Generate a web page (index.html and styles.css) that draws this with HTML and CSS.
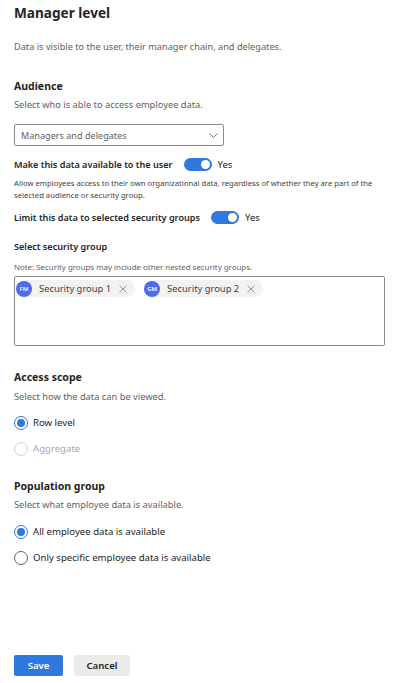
FILE: index.html
```html
<!DOCTYPE html>
<html lang="en">
<head>
<meta charset="utf-8">
<title>Manager level</title>
<link rel="stylesheet" href="styles.css">
</head>
<body>
<main class="panel">
  <h1 class="title">Manager level</h1>
  <p class="desc">Data is visible to the user, their manager chain, and delegates.</p>

  <h2 class="section-title audience">Audience</h2>
  <p class="sub">Select who is able to access employee data.</p>

  <div class="dropdown">
    <span>Managers and delegates</span>
    <svg class="chev" width="9" height="5" viewBox="0 0 9 5"><path d="M0.5 0.5 L4.5 4.5 L8.5 0.5" fill="none" stroke="#616161" stroke-width="0.9"/></svg>
  </div>

  <div class="toggle-row first">
    <span class="label">Make this data available to the user</span>
    <span class="toggle"><span class="knob"></span></span>
    <span class="yes">Yes</span>
  </div>
  <p class="hint">Allow employees access to their own organizational data, regardless of whether they are part of the selected audience or security group.</p>

  <div class="toggle-row second">
    <span class="label">Limit this data to selected security groups</span>
    <span class="toggle"><span class="knob"></span></span>
    <span class="yes">Yes</span>
  </div>

  <p class="label field-label">Select security group</p>
  <p class="note">Note: Security groups may include other nested security groups.</p>
  <div class="picker">
    <span class="chip"><span class="avatar">FM</span><span class="chip-text">Security group 1</span><svg class="x" width="8" height="8" viewBox="0 0 8 8"><path d="M0.5 0.5 L7.5 7.5 M7.5 0.5 L0.5 7.5" stroke="#8a8a8a" stroke-width="0.9"/></svg></span>
    <span class="chip"><span class="avatar">GM</span><span class="chip-text">Security group 2</span><svg class="x" width="8" height="8" viewBox="0 0 8 8"><path d="M0.5 0.5 L7.5 7.5 M7.5 0.5 L0.5 7.5" stroke="#8a8a8a" stroke-width="0.9"/></svg></span>
  </div>

  <h2 class="section-title scope">Access scope</h2>
  <p class="sub">Select how the data can be viewed.</p>
  <div class="radio checked r1"><span class="circle"></span><span>Row level</span></div>
  <div class="radio disabled r2"><span class="circle"></span><span>Aggregate</span></div>

  <h2 class="section-title population">Population group</h2>
  <p class="sub">Select what employee data is available.</p>
  <div class="radio checked r3"><span class="circle"></span><span>All employee data is available</span></div>
  <div class="radio r2"><span class="circle"></span><span>Only specific employee data is available</span></div>

  <div class="actions">
    <button class="btn primary">Save</button>
    <button class="btn secondary">Cancel</button>
  </div>
</main>
</body>
</html>
```
FILE: styles.css
```css
* { box-sizing: border-box; margin: 0; padding: 0; }
html, body { background: #ffffff; }
body {
  font-family: "Noto Sans", "Open Sans", sans-serif;
  color: #242424;
}
.panel {
  width: 385px;
  padding: 3px 0 0 14px;
}
.title {
  font-size: 13.6px;
  font-weight: 700;
  line-height: 20px;
}
.desc {
  margin-top: 17px;
  font-size: 9.2px;
  line-height: 14px;
  color: #616161;
}
.section-title {
  font-size: 10.5px;
  font-weight: 700;
  line-height: 16px;
}
.audience { margin-top: 24px; }
.scope { margin-top: 23px; }
.population { margin-top: 22px; }
.sub {
  margin-top: 4px;
  font-size: 9.3px;
  line-height: 14px;
  color: #616161;
}
.scope + .sub { margin-top: 5px; }
.dropdown {
  margin-top: 12px;
  width: 210px;
  height: 22px;
  border: 1px solid #8a8a8a;
  border-radius: 2px;
  display: flex;
  align-items: center;
  justify-content: space-between;
  padding: 0 5px 0 6px;
  font-size: 9.1px;
  color: #616161;
}
.chev { display: block; }
.toggle-row {
  display: flex;
  align-items: center;
  height: 14px;
}
.toggle-row.first { margin-top: 11px; }
.toggle-row.second { margin-top: 9px; }
.label {
  font-size: 9.1px;
  font-weight: 600;
  color: #242424;
}
.toggle {
  margin-left: 11px;
  width: 28px;
  height: 13px;
  border-radius: 7px;
  background: #2f78e0;
  display: flex;
  align-items: center;
  justify-content: flex-end;
  padding-right: 2px;
}
.knob {
  width: 9px;
  height: 9px;
  border-radius: 50%;
  background: #ffffff;
}
.yes {
  margin-left: 6px;
  font-size: 9.5px;
  color: #242424;
}
.hint {
  margin-top: 6px;
  font-size: 7.7px;
  line-height: 12px;
  color: #424242;
}
.field-label {
  margin-top: 16px;
  line-height: 14px;
}
.note {
  margin-top: 7px;
  font-size: 7.9px;
  line-height: 12px;
  color: #616161;
}
.picker {
  margin-top: 3px;
  width: 371px;
  height: 70px;
  border: 1px solid #8a8a8a;
  border-radius: 2px;
  display: flex;
  align-items: flex-start;
  gap: 9px;
  padding: 3px 0 0 1px;
}
.chip {
  display: flex;
  align-items: center;
  height: 17px;
  background: #f3f2f1;
  border-radius: 9px;
  padding-right: 8px;
}
.avatar {
  width: 16px;
  height: 16px;
  border-radius: 50%;
  background: #4f6bed;
  color: #ffffff;
  font-size: 6px;
  font-weight: 600;
  display: flex;
  align-items: center;
  justify-content: center;
}
.chip-text {
  margin-left: 7px;
  font-size: 9.4px;
  color: #424242;
}
.x { margin-left: 8px; display: block; }
.radio {
  display: flex;
  align-items: center;
  height: 15px;
  font-size: 9.6px;
  color: #242424;
}
.radio.r1 { margin-top: 11px; }
.radio.r2 { margin-top: 11px; }
.radio.r3 { margin-top: 12px; }
.circle {
  width: 14px;
  height: 14px;
  border-radius: 50%;
  border: 1px solid #616161;
  margin-right: 5px;
  display: flex;
  align-items: center;
  justify-content: center;
  flex: none;
}
.radio.checked .circle { border-color: #2f78e0; }
.radio.checked .circle::after {
  content: "";
  width: 8px;
  height: 8px;
  border-radius: 50%;
  background: #2f78e0;
}
.radio.disabled { color: #a6a6a6; }
.radio.disabled .circle { border-color: #d1d1d1; }
.actions {
  margin-top: 90px;
  display: flex;
  gap: 11px;
}
.btn {
  height: 21px;
  border: none;
  border-radius: 2px;
  font-family: "Noto Sans", "Open Sans", sans-serif;
  font-size: 9.6px;
  font-weight: 600;
}
.primary { width: 49px; background: #2f78e0; color: #ffffff; }
.secondary { width: 56px; background: #ebebeb; color: #242424; }
```
